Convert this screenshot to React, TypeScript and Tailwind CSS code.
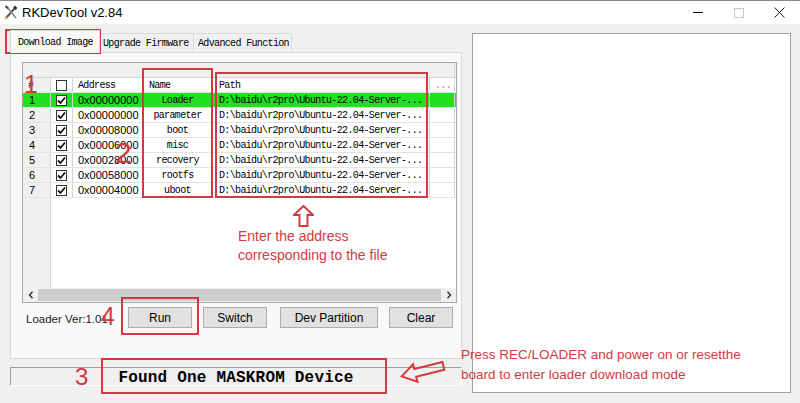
const RED = "#d33a3f"

const rows = [
  { n: 1, addr: "0x00000000", name: "Loader" },
  { n: 2, addr: "0x00000000", name: "parameter" },
  { n: 3, addr: "0x00008000", name: "boot" },
  { n: 4, addr: "0x00006000", name: "misc" },
  { n: 5, addr: "0x00028000", name: "recovery" },
  { n: 6, addr: "0x00058000", name: "rootfs" },
  { n: 7, addr: "0x00004000", name: "uboot" },
]

const mono = "font-['Liberation_Mono',monospace] text-[10px] tracking-[-0.65px]"

const Check = ({ on }: { on: boolean }) => (
  <span className="w-[11px] h-[11px] bg-white border border-[#333] flex items-center justify-center">
    {on && (
      <svg width="9" height="9" viewBox="0 0 9 9">
        <path d="M1 4.5 L3.5 7 L8 1.5" stroke="#111" strokeWidth="1.8" fill="none" />
      </svg>
    )}
  </span>
)

const ToolIcon = () => (
  <svg width="14" height="15" viewBox="0 0 14 15" className="ml-[4px]">
    <path d="M2 13 L11 3" stroke="#555" strokeWidth="2" />
    <path d="M10 1.5 L12.5 4" stroke="#333" strokeWidth="2.5" />
    <path d="M3 2 L12 13" stroke="#888" strokeWidth="1.6" />
    <path d="M1.5 1 L4 3.5" stroke="#444" strokeWidth="2" />
    <path d="M1 14 L3 12" stroke="#e0b030" strokeWidth="2" />
  </svg>
)

const Arrow = ({ d }: { d: string }) => (
  <div className="w-[15px] flex items-center justify-center">
    <svg width="6" height="8" viewBox="0 0 6 8">
      <path d={d} stroke="#333" strokeWidth="1.5" fill="none" />
    </svg>
  </div>
)

const Button = ({ label, w, ml }: { label: string; w: string; ml: string }) => (
  <div className={`${w} ${ml} h-[21px] bg-[#e1e1e1] border border-[#adadad] flex items-center justify-center text-[12px] text-black`}>
    {label}
  </div>
)

export default function App() {
  return (
    <div className="relative w-[800px] h-[403px] overflow-hidden bg-[#f0f0f0] flex flex-col font-['Liberation_Sans',sans-serif]">
      {/* title bar */}
      <div className="h-[24px] bg-white flex items-center border-t border-[#8a8a8a]">
        <ToolIcon />
        <span className="ml-[4px] text-[13px] text-black">RKDevTool v2.84</span>
        <div className="ml-auto flex h-full">
          <div className="w-[41px] flex items-center justify-center">
            <span className="w-[10px] h-px bg-black" />
          </div>
          <div className="w-[41px] flex items-center justify-center">
            <span className="w-[10px] h-[10px] border border-[#c8c8c8]" />
          </div>
          <div className="w-[41px] flex items-center justify-center">
            <svg width="11" height="11" viewBox="0 0 11 11">
              <path d="M0.5 0.5 L10.5 10.5 M10.5 0.5 L0.5 10.5" stroke="#222" strokeWidth="1" />
            </svg>
          </div>
        </div>
      </div>

      <div className="flex-1 flex pt-[6px]">
        {/* left column */}
        <div className="w-[462px] pl-[10px] flex flex-col">
          <div className={`h-[22px] flex items-end ${mono} text-black`}>
            <div className="relative z-10 -mb-px h-[23px] w-[90px] pl-[7px] bg-[#f9f9f9] border border-b-0 border-[#d9d9d9] flex items-center">
              Download Image
            </div>
            <div className="h-[19px] w-[94px] pl-[3px] border border-l-0 border-b-0 border-[#d9d9d9] flex items-center">
              Upgrade Firmware
            </div>
            <div className="h-[19px] w-[98px] pl-[4px] border border-l-0 border-b-0 border-[#d9d9d9] flex items-center">
              Advanced Function
            </div>
          </div>

          <div className="h-[307px] bg-[#f9f9f9] border border-[#d9d9d9] pl-[11px] pt-[9px] flex flex-col">
            {/* list */}
            <div className="w-[435px] h-[241px] border border-[#a8a8a8] bg-white flex flex-col">
              <div className="h-[15px] bg-[#f0f0f0] border-b border-[#d5d5d5] flex">
                <div className="w-[432px] border-r border-[#d5d5d5]" />
              </div>
              <div className={`h-[15px] flex border-b border-[#e3e3e3] ${mono} text-black`}>
                <div className="w-[28px] bg-[#f0f0f0] border-r border-[#d5d5d5] pl-[5px] flex items-center">#</div>
                <div className="w-[22px] border-r border-[#d5d5d5] flex items-center justify-center">
                  <Check on={false} />
                </div>
                <div className="w-[70px] border-r border-[#d5d5d5] pl-[5px] flex items-center">Address</div>
                <div className="w-[70px] border-r border-[#d5d5d5] pl-[6px] flex items-center">Name</div>
                <div className="w-[217px] border-r border-[#d5d5d5] pl-[6px] flex items-center">Path</div>
                <div className="w-[25px] border-r border-[#d5d5d5] pl-[5px] flex items-center text-[#888]">...</div>
              </div>
              {rows.map((r) => (
                <div
                  key={r.n}
                  className={`h-[15px] flex border-b border-[#e3e3e3] text-black ${r.n === 1 ? "bg-[#20e020]" : ""}`}
                >
                  <div className={`w-[28px] border-r border-[#d5d5d5] pl-[6px] flex items-center text-[11px] ${r.n === 1 ? "" : "bg-[#f0f0f0]"}`}>
                    {r.n}
                  </div>
                  <div className="w-[22px] border-r border-[#d5d5d5] flex items-center justify-center">
                    <Check on />
                  </div>
                  <div className="w-[70px] border-r border-[#d5d5d5] pl-[5px] flex items-center text-[11px]">{r.addr}</div>
                  <div className={`w-[70px] border-r border-[#d5d5d5] flex items-center justify-center ${mono}`}>{r.name}</div>
                  <div className={`w-[217px] border-r border-[#d5d5d5] pl-[6px] flex items-center ${mono}`}>
                    D:\baidu\r2pro\Ubuntu-22.04-Server-...
                  </div>
                  <div className="w-[25px] border-r border-[#d5d5d5]" />
                </div>
              ))}
              <div className="flex-1 flex">
                <div className="w-[28px] bg-[#f0f0f0] border-r border-[#d5d5d5]" />
              </div>
              <div className="h-[14px] bg-[#f0f0f0] flex items-center">
                <Arrow d="M4.5 0.8 L1.5 4 L4.5 7.2" />
                <div className="flex-1 h-[12px] bg-[#cdcdcd]" />
                <Arrow d="M1.5 0.8 L4.5 4 L1.5 7.2" />
              </div>
            </div>

            {/* buttons */}
            <div className="mt-[4px] h-[21px] flex items-center">
              <span className="w-[106px] pl-[4px] pt-[4px] text-[11.5px] text-[#222]">Loader Ver:1.01</span>
              <Button label="Run" w="w-[64px]" ml="ml-0" />
              <Button label="Switch" w="w-[64px]" ml="ml-[11px]" />
              <Button label="Dev Partition" w="w-[98px]" ml="ml-[13px]" />
              <Button label="Clear" w="w-[64px]" ml="ml-[11px]" />
            </div>
          </div>

          {/* status */}
          <div className="mt-[8px] h-[19px] border-t border-l border-[#a0a0a0] border-b border-r border-b-white border-r-white flex items-center justify-center">
            <span className="font-['Liberation_Mono',monospace] font-bold text-[16px] tracking-[0.2px] text-black pt-[2px]">
              Found One MASKROM Device
            </span>
          </div>
        </div>

        {/* right panel */}
        <div className="ml-[10px] mt-[3px] w-[319px] h-[360px] bg-white border border-[#a0a0a0]" />
      </div>

      {/* annotations */}
      <div className="absolute left-[5px] top-[29px] w-[96px] h-[25px] border-2" style={{ borderColor: RED }} />
      <div className="absolute left-[142px] top-[68px] w-[71px] h-[130px] border-2" style={{ borderColor: RED }} />
      <div className="absolute left-[215px] top-[72px] w-[213px] h-[126px] border-2" style={{ borderColor: RED }} />
      <div className="absolute left-[121px] top-[297px] w-[78px] h-[38px] border-2" style={{ borderColor: RED }} />
      <div className="absolute left-[101px] top-[358px] w-[286px] h-[36px] border-2" style={{ borderColor: RED }} />

      <span className="absolute left-[24px] top-[72px] text-[25px] leading-none" style={{ color: RED }}>1</span>
      <span className="absolute left-[115px] top-[138px] text-[30px] leading-none" style={{ color: RED }}>2</span>
      <span className="absolute left-[75px] top-[365px] text-[24px] leading-none" style={{ color: RED }}>3</span>
      <span className="absolute left-[101px] top-[304px] text-[25px] leading-none" style={{ color: RED }}>4</span>

      <svg className="absolute left-[293px] top-[205px]" width="21" height="22" viewBox="0 0 21 22">
        <path d="M10.5 1 L20 10 L14.5 10 L14.5 21 L6.5 21 L6.5 10 L1 10 Z" fill="none" stroke={RED} strokeWidth="2" />
      </svg>

      <svg className="absolute left-[398px] top-[356px]" width="50" height="30" viewBox="0 0 50 30">
        <g transform="rotate(-14 25 15)">
          <path d="M3 15 L17 6 L17 11 L46 11 L46 19 L17 19 L17 24 Z" fill="none" stroke={RED} strokeWidth="2" />
        </g>
      </svg>

      <div className="absolute left-[238px] top-[227px] text-[14px] leading-[19px]" style={{ color: RED }}>
        <div>Enter the address</div>
        <div>corresponding to the file</div>
      </div>

      <div className="absolute left-[461px] top-[345px] text-[13.5px] leading-[20px]" style={{ color: RED }}>
        <div>Press REC/LOADER and power on or resetthe</div>
        <div>board to enter loader download mode</div>
      </div>
    </div>
  )
}
